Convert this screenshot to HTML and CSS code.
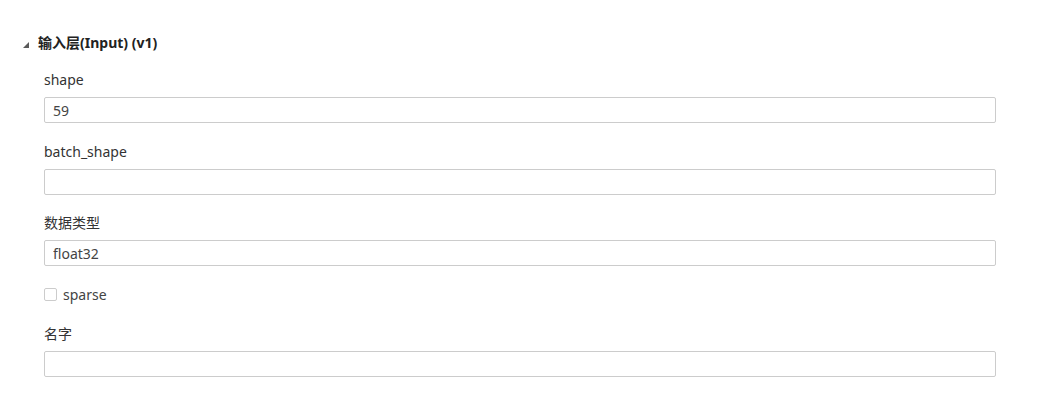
FILE: index.html
```html
<!DOCTYPE html>
<html lang="zh-CN">
<head>
    <meta charset="UTF-8">
    <meta name="viewport" content="width=device-width, initial-scale=1.0">
    <title>输入层</title>
    <link rel="stylesheet" href="styles.css">
</head>
<body>
    <section class="layer">
        <div class="layer-title">
            <svg class="caret" width="8" height="8" viewBox="0 0 8 8"><polygon points="7,1 7,7 1,7" /></svg>
            <span>输入层(Input) (v1)</span>
        </div>

        <div class="fields">
            <div class="field">
                <label for="shape">shape</label>
                <input type="text" id="shape" value="59" />
            </div>
            <div class="field">
                <label for="batch_shape">batch_shape</label>
                <input type="text" id="batch_shape" value="" />
            </div>
            <div class="field">
                <label for="dtype">数据类型</label>
                <input type="text" id="dtype" value="float32" />
            </div>
            <div class="check-row">
                <span class="check-box"></span>
                <span>sparse</span>
            </div>
            <div class="field">
                <label for="name">名字</label>
                <input type="text" id="name" value="" />
            </div>
        </div>
    </section>
</body>
</html>
```

FILE: styles.css
```css
body {
    margin: 0;
    padding: 0;
    background: #fff;
    color: #333;
    font-family: "Noto Sans", "Noto Sans CJK SC", sans-serif;
    font-size: 14px;
}
.layer {
    padding-top: 33px;
}
.layer-title {
    display: flex;
    align-items: center;
    height: 20px;
    line-height: 20px;
    padding-left: 22px;
    font-weight: bold;
    color: #222;
}
.caret {
    fill: #5a5a5a;
    margin-right: 8px;
    margin-top: 3px;
}
.fields {
    width: 952px;
    margin-left: 44px;
    padding-top: 17px;
}
.field {
    margin-bottom: 18.5px;
}
.field label {
    display: block;
    line-height: 20px;
    margin-bottom: 7px;
}
.field input {
    display: block;
    box-sizing: border-box;
    width: 100%;
    height: 26px;
    margin: 0;
    padding: 0 8px;
    border: 1px solid #ccc;
    border-radius: 2px;
    font-family: inherit;
    font-size: 14px;
    color: #444;
    outline: none;
}
.check-row {
    display: flex;
    align-items: center;
    gap: 6px;
    height: 20px;
    line-height: 20px;
    margin-bottom: 19px;
    color: #444;
}
.check-box {
    box-sizing: border-box;
    width: 13px;
    height: 13px;
    border: 1px solid #ccc;
    border-radius: 2px;
    background: #fff;
}
```
